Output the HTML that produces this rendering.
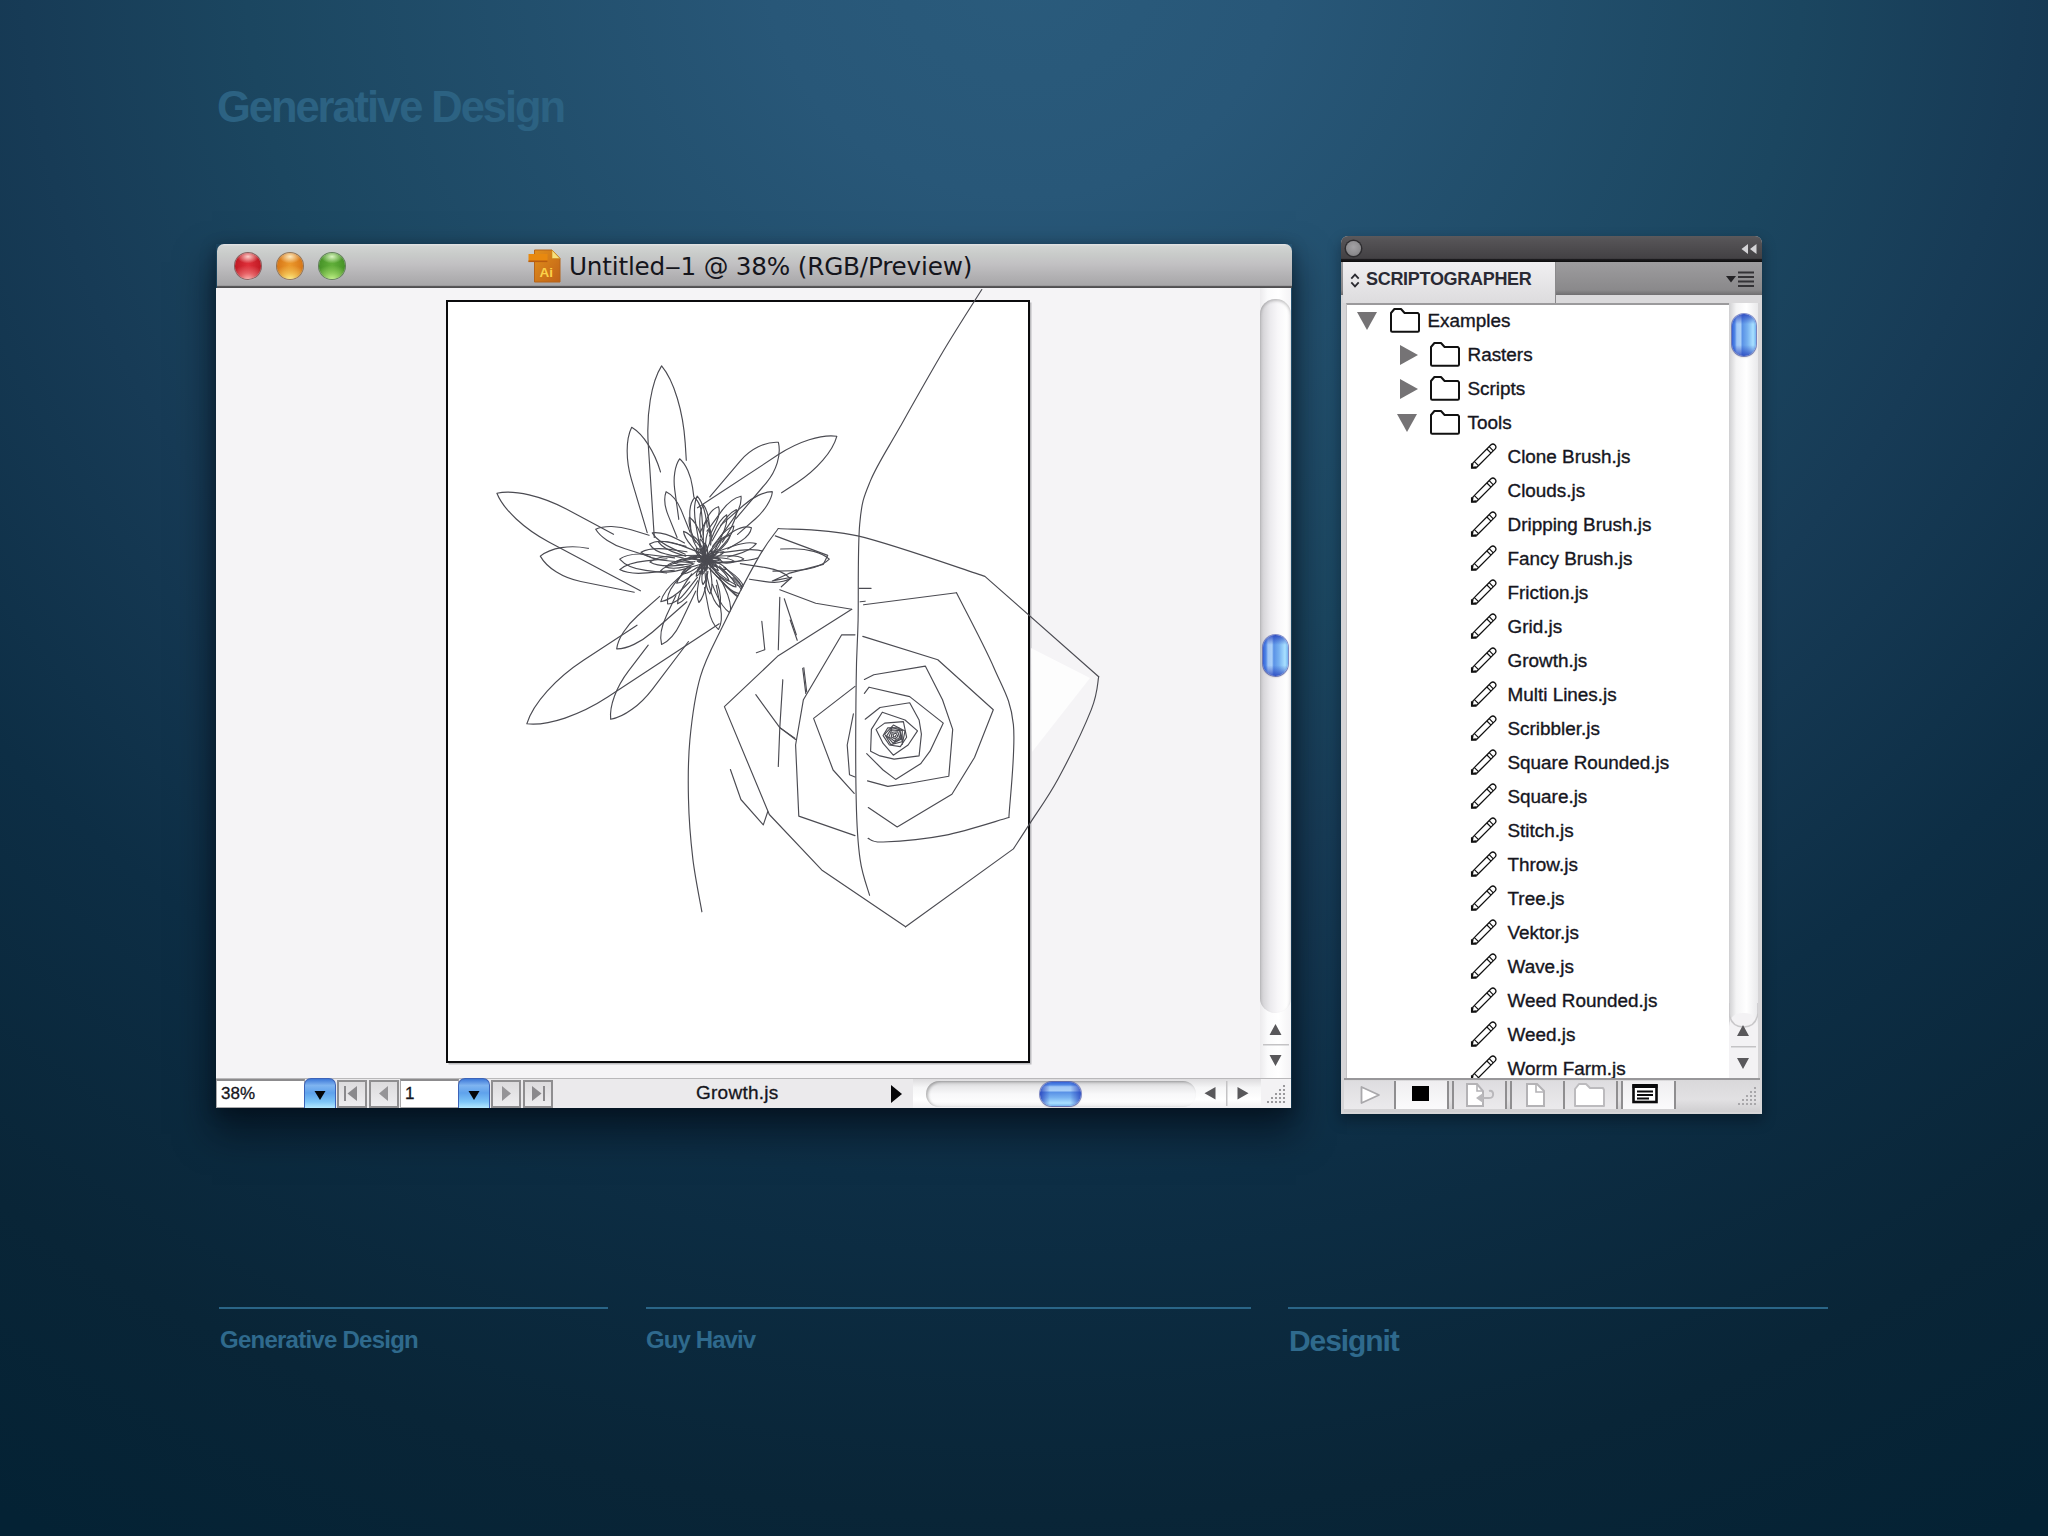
<!DOCTYPE html>
<html lang="en"><head><meta charset="utf-8"><title>Generative Design</title>
<style>
*{box-sizing:border-box;margin:0;padding:0}
html,body{width:2048px;height:1536px;overflow:hidden}
body{position:relative;font-family:"Liberation Sans",sans-serif;background:#0a2840;
 background-image:radial-gradient(ellipse 1974px 1811px at 50% -40px,#2a5b7c 0%,#285778 13%,#1b4660 39.4%,#173b56 50.6%,#0d2e45 67.6%,#092537 86%,#042234 100%)}
.abs{position:absolute}
h1{position:absolute;left:217px;top:82px;font-size:43.5px;line-height:50px;font-weight:bold;letter-spacing:-2.06px;color:#2c6282;white-space:nowrap}
.foot{position:absolute;top:1307px;border-top:2px solid #2a6587;color:#2f6a8d;font-weight:bold;white-space:nowrap}
.foot span{position:absolute;left:0}
/* main window */
#win{position:absolute;left:216px;top:244px;width:1076px;height:864px;box-shadow:0 22px 34px 4px rgba(0,8,16,.55),0 4px 14px rgba(0,8,16,.35)}
#tbar{position:absolute;left:1px;top:0;width:1075px;height:44px;border-radius:7px 7px 0 0;
 background:linear-gradient(#e4e4e6 0,#d2d4d3 5%,#c9ccca 22%,#c2c1c3 45%,#b1b0b2 75%,#a8a7a9 94%,#5a595b 96%,#4c4b4d 100%)}
.tl{position:absolute;top:9px;width:26px;height:26px;border-radius:50%}
#ttl{position:absolute;left:352px;top:7px;font-family:"DejaVu Sans","Liberation Sans",sans-serif;font-size:24.7px;line-height:32px;color:#15151c;white-space:nowrap;letter-spacing:-.2px}
#canvas{position:absolute;left:0;top:44px;width:1075px;height:790px;background:#f5f4f6;overflow:hidden}
#vs{position:absolute;left:1044px;top:44px;width:31px;height:790px;background:linear-gradient(90deg,#ecebed 0,#fbfbfc 25%,#fff 60%,#f4f3f5 100%)}
#vtrack{position:absolute;left:0;top:11px;width:31px;height:714px;border-radius:15px;
 background:linear-gradient(90deg,#c9c8cb 0,#dad9dc 14%,#ecebee 34%,#f8f7f9 58%,#fefefe 85%,#f3f2f4 100%);box-shadow:inset 0 2px 3px rgba(0,0,0,.22)}
.thumb{position:absolute;border-radius:13px}
#sbar{position:absolute;left:0;top:834px;width:1075px;height:30px;background:#ebeaec;border-top:1px solid #b9b8ba;font-size:17px;color:#15151c;-webkit-text-stroke:.3px #15151c}
.fld{position:absolute;top:0;height:29px;background:#fff;border:1px solid #a9a8aa;border-top:2px solid #8c8b8d;line-height:26px;padding-left:4px}
.dd{position:absolute;top:-1px;height:30px;width:32px;border-radius:7px 7px 0 0;border:1px solid #3c63b8;border-bottom:none;
 background:linear-gradient(#3d78d8 0,#7fb4f0 22%,#5fa2ec 48%,#7cc4f7 78%,#b4e8ff 100%)}
.nb{position:absolute;top:1px;height:28px;width:30px;border:2px solid #8f8e90;background:linear-gradient(#dcdbdd,#eeedef)}
.nb svg,.dd svg{position:absolute;left:0;top:0}
/* panel */
#pan{position:absolute;left:1341px;top:236px;width:421px;height:878px;background:#d6d5d7;border-radius:7px 7px 0 0;box-shadow:0 6px 14px rgba(0,8,16,.4)}
#pdark{position:absolute;left:0;top:0;width:421px;height:26px;border-radius:7px 7px 0 0;background:linear-gradient(#5b595c 0,#545255 20%,#434144 86%,#1c1b1e 90%,#0c0c0d 100%)}
#pstrip{position:absolute;left:0;top:26px;width:421px;height:33px;background:linear-gradient(#9d9c9e,#8a898b 85%,#6f6e70 100%)}
#ptab{position:absolute;left:2px;top:26px;width:213px;height:41px;background:linear-gradient(#f0eff1,#dddcde);border-right:1px solid #8a898b;
 font-weight:bold;font-size:18px;letter-spacing:-.3px;color:#2a2a34;line-height:34px;white-space:nowrap}
#pband{position:absolute;left:2px;top:59px;width:417px;height:8px;background:#dad9db}
#tree{position:absolute;left:5px;top:67px;width:383px;height:775px;background:#fff;border-top:2px solid #9b9a9c;border-left:1px solid #c4c3c5;overflow:hidden}
.row{position:absolute;left:0;width:383px;height:34px}
.ic{position:absolute} .ic svg{display:block}
.lbl{position:absolute;top:-.6px;line-height:34px;font-size:18.9px;color:#16161e;white-space:nowrap;-webkit-text-stroke:.35px #16161e}
#pvs{position:absolute;left:388px;top:67px;width:29px;height:776px;background:linear-gradient(90deg,#cfcfd1 0,#f4f4f5 25%,#fff 60%,#e9e9eb 100%)}
#ptool{position:absolute;left:3px;top:842px;width:416px;height:34px;background:linear-gradient(#d9d8da,#e2e1e3 60%,#cfced0);border-top:2px solid #98979a}
.tb{position:absolute;top:1px;height:28px;border-left:2px solid #8f8e90;border-right:2px solid #8f8e90;background:linear-gradient(#dedde0,#ebeaec)}
.tb.on{background:linear-gradient(#efeef0,#fbfbfc)}
.tb svg{position:absolute}
</style></head><body>
<h1>Generative Design</h1>

<div id="win">
 <div id="tbar">
  <div class="tl" style="left:18px;background:radial-gradient(ellipse 42% 26% at 50% 14%,rgba(255,215,210,.95) 0,rgba(255,200,195,0) 100%),radial-gradient(ellipse 75% 55% at 50% 102%,#ffb4b0 0,rgba(255,150,150,.55) 45%,rgba(240,80,80,0) 100%),radial-gradient(circle at 50% 45%,#e0303a 0,#c41c26 60%,#8a1016 100%);box-shadow:0 0 0 1px rgba(95,25,25,.6),0 1px 1px rgba(255,255,255,.5)"></div>
  <div class="tl" style="left:60px;background:radial-gradient(ellipse 42% 26% at 50% 14%,rgba(255,240,200,.95) 0,rgba(255,230,190,0) 100%),radial-gradient(ellipse 75% 55% at 50% 102%,#fff08a 0,rgba(255,225,110,.6) 45%,rgba(240,170,60,0) 100%),radial-gradient(circle at 50% 45%,#ec9a2c 0,#d97a1a 60%,#a0540e 100%);box-shadow:0 0 0 1px rgba(110,60,10,.6),0 1px 1px rgba(255,255,255,.5)"></div>
  <div class="tl" style="left:102px;background:radial-gradient(ellipse 42% 26% at 50% 14%,rgba(225,250,200,.95) 0,rgba(220,250,190,0) 100%),radial-gradient(ellipse 75% 55% at 50% 102%,#c6f58e 0,rgba(180,235,120,.6) 45%,rgba(120,200,80,0) 100%),radial-gradient(circle at 50% 45%,#62b03a 0,#4a962a 60%,#2c6816 100%);box-shadow:0 0 0 1px rgba(30,80,15,.6),0 1px 1px rgba(255,255,255,.5)"></div>
  <svg class="abs" style="left:310px;top:4px" width="36" height="36" viewBox="0 0 36 36">
   <defs><linearGradient id="ag" x1="0" y1="0" x2="1" y2="1"><stop offset="0" stop-color="#e3901a"/><stop offset="1" stop-color="#bf6218"/></linearGradient></defs>
   <path d="M7.5,2 L25,2 L33,10.5 L33,34 L7.5,34 Z" fill="url(#ag)" stroke="#b5641a" stroke-width="1"/>
   <path d="M25,2 L25,10.5 L33,10.5 Z" fill="#f7e07c" stroke="#c98a1e" stroke-width=".6"/>
   <rect x="1.5" y="6" width="19" height="8" fill="#e8890f"/><rect x="1.5" y="12.5" width="19" height="1.6" fill="#b85c10"/>
   <text x="12.5" y="28.5" font-family="Liberation Sans,sans-serif" font-weight="bold" font-size="13.5" fill="#fbd24a">Ai</text>
  </svg>
  <div id="ttl">Untitled‒1 @ 38% (RGB/Preview)</div>
 </div>
 <div id="canvas"></div>
 <svg class="abs" style="left:0;top:44px" width="1044" height="790" viewBox="216 288 1044 790">
  <defs><clipPath id="fc"><polygon points="440,290 1040,290 1040,528 778.3,528.5 758.8,557 722.9,625.8 700.4,676.7 690,739.6 688.5,799.5 693,859.4 702,911.8 702,1070 440,1070"/></clipPath></defs>
  <rect x="448.5" y="302.5" width="583" height="762" fill="rgba(120,120,125,.45)"/>
  <rect x="447" y="301" width="582" height="761" fill="#fff" stroke="#0b0b0d" stroke-width="2"/>
  <path d="M1031,648 L1090,678 L1032,752 Z" fill="#fff" opacity=".8"/>
  <g fill="none" stroke="#4b4b52" stroke-width="1.15" stroke-linejoin="round" stroke-linecap="round">
<g clip-path="url(#fc)"><path d="M686.3,460.3 L685.2,442.9 C683.1,411.6 674.1,380.8 661.6,365.9 C651.2,382.3 646.2,414.0 648.3,445.3 L654.3,537.4"/>
<path d="M660.5,472.0 L660.2,470.9 C654.5,451.8 643.4,434.3 631.7,427.3 C625.6,439.5 625.8,460.3 631.4,479.4 L647.2,532.6"/>
<path d="M613.5,534.3 L566.3,509.1 C542.0,496.2 514.5,489.5 496.9,493.2 C503.6,509.9 524.5,529.0 548.8,542.0 L640.4,590.8"/>
<path d="M588.4,548.4 L587.5,548.2 C569.9,544.7 551.2,547.5 540.3,556.1 C547.0,568.2 563.3,578.0 580.8,581.5 L634.3,592.2"/>
<path d="M781.6,492.8 L796.9,482.7 C816.5,469.8 832.7,451.5 836.8,436.3 C821.3,434.1 798.1,441.7 778.4,454.6 L697.5,507.8"/>
<path d="M735.7,518.9 L766.3,482.8 C776.3,471.0 781.4,455.0 778.4,442.3 C765.4,441.4 750.4,449.0 740.4,460.8 L709.8,496.9"/>
<path d="M637.0,625.2 L583.5,660.3 C556.0,678.3 533.1,703.4 526.8,723.8 C548.1,726.2 580.2,715.1 607.7,697.1 L719.2,623.8"/>
<path d="M648.2,645.1 L628.4,671.2 C616.5,686.8 609.2,705.9 610.7,719.3 C624.0,717.1 640.4,704.9 652.3,689.3 L688.5,641.5"/>
<path d="M659.7,596.4 L637.7,615.8 C626.4,625.7 617.8,638.8 616.7,648.9 C626.9,649.1 640.9,642.2 652.3,632.3 L686.9,601.8"/>
<path d="M649.0,535.3 L631.1,529.7 C618.1,525.7 604.0,525.3 595.7,529.2 C600.4,537.1 612.2,544.8 625.1,548.8 L650.2,556.7"/>
<path d="M693.9,497.1 L692.5,487.2 C690.9,475.4 685.9,464.0 679.6,458.8 C674.9,465.5 673.1,477.8 674.7,489.6 L678.8,519.3"/>
<path d="M737.6,534.4 L755.5,518.7 C764.6,510.6 771.5,499.9 772.4,491.7 C764.2,491.6 752.7,497.1 743.6,505.2 L720.6,525.4"/>
<path d="M690.1,532.2 L681.4,510.6 C677.9,502.0 671.9,494.4 666.1,491.7 C663.8,497.7 664.9,507.3 668.4,515.9 L677.1,537.5"/>
<path d="M675.9,595.5 L666.5,615.4 C661.7,625.7 659.6,637.2 661.6,644.5 C668.5,641.5 676.1,632.5 681.0,622.3 L695.8,591.0"/>
<path d="M674.6,557.9 L647.6,554.5 C636.9,553.2 625.7,554.9 619.7,559.1 C624.5,564.7 634.9,569.1 645.7,570.4 L666.6,573.0"/>
<path d="M718.3,539.4 L732.5,519.9 C738.2,512.0 741.7,502.7 741.0,496.2 C734.6,497.6 726.8,503.8 721.2,511.6 L707.0,531.2"/>
<path d="M686.0,546.4 L668.5,542.3 C661.5,540.7 654.0,541.3 649.6,544.1 C652.3,548.6 658.8,552.4 665.8,554.0 L683.3,558.1"/>
<path d="M686.4,568.7 L674.2,584.2 C669.4,590.4 666.6,598.3 667.6,604.0 C673.4,603.6 680.4,599.0 685.2,592.8 L697.4,577.3"/>
<path d="M727.6,549.0 L741.1,540.9 C746.5,537.7 750.7,532.5 751.5,527.7 C746.9,526.1 740.3,527.4 734.9,530.6 L721.4,538.7"/>
<path d="M667.0,558.8 L646.0,560.9 C635.3,562.0 624.7,565.3 619.7,569.6 C625.4,572.7 636.5,573.9 647.2,572.9 L674.2,570.2"/>
<path d="M704.5,587.5 L708.6,609.0 C710.2,617.7 714.1,625.9 718.5,629.5 C721.4,624.5 722.0,615.4 720.4,606.8 L716.3,585.3"/>
<path d="M716.7,576.2 L727.5,587.0 C731.8,591.3 737.7,594.0 742.5,593.5 C743.0,588.8 740.3,582.8 735.9,578.5 L725.2,567.7"/>
<path d="M703.2,535.0 L701.9,516.1 C701.4,508.6 698.5,501.2 694.6,497.7 C691.1,501.7 689.4,509.5 689.9,517.0 L691.3,535.9"/>
<path d="M709.5,535.9 L716.3,522.4 C718.9,517.0 719.9,510.8 718.5,506.7 C714.4,508.0 710.0,512.5 707.3,517.9 L700.6,531.4"/>
<path d="M705.0,559.0 L703.7,559.6 C702.9,559.9 702.2,560.6 702.1,561.3 C702.7,561.7 703.7,561.6 704.5,561.1 L706.3,560.1"/>
<path d="M707.9,557.7 L708.5,556.2 C708.9,555.2 709.0,554.0 708.6,553.3 C707.9,553.6 707.2,554.6 706.9,555.6 L706.4,557.3"/>
<path d="M707.0,561.4 L707.9,563.0 C708.5,564.1 709.5,565.1 710.3,565.3 C710.5,564.5 710.1,563.2 709.4,562.1 L708.1,560.2"/>
<path d="M703.3,556.7 L702.7,556.4 C701.3,555.7 699.8,555.4 698.8,555.6 C699.3,556.5 700.5,557.4 701.9,558.0 L703.3,558.5"/>
<path d="M708.4,558.9 L711.6,557.2 C713.1,556.4 714.4,555.3 714.9,554.3 C713.8,554.3 712.2,554.8 710.7,555.7 L708.0,557.4"/>
<path d="M705.7,560.2 L705.1,564.9 C704.9,566.8 705.0,568.8 705.6,569.8 C706.3,568.9 706.8,567.0 707.0,565.1 L707.2,560.4"/>
<path d="M705.7,556.1 L703.8,553.1 C702.7,551.2 701.2,549.7 700.0,549.1 C700.0,550.4 700.9,552.4 702.1,554.2 L702.9,555.3"/>
<path d="M710.3,560.2 L713.7,560.3 C716.0,560.4 718.4,560.0 719.6,559.3 C718.4,558.5 716.1,558.0 713.7,558.1 L712.8,558.1"/>
<path d="M702.0,562.8 L700.6,564.3 C698.9,566.3 697.7,568.5 697.5,570.1 C699.0,569.6 700.9,567.9 702.5,565.9 L703.1,565.2"/>
<path d="M707.4,554.1 L707.3,550.6 C707.2,547.8 706.5,545.1 705.5,543.8 C704.6,545.2 704.4,548.0 704.6,550.8 L705.2,556.7"/>
<path d="M708.5,562.8 L712.1,566.4 C714.1,568.6 716.6,570.3 718.4,570.6 C718.0,568.8 716.2,566.4 714.1,564.4 L711.0,561.6"/>
<path d="M701.1,557.1 L697.0,556.6 C693.9,556.1 690.7,556.3 689.0,557.2 C690.5,558.5 693.6,559.3 696.7,559.6 L699.6,559.8"/>
<path d="M708.8,559.6 L716.7,556.7 C719.9,555.5 722.8,553.6 723.9,551.9 C721.9,551.5 718.6,552.3 715.5,553.7 L708.8,556.6"/>
<path d="M701.3,564.7 L699.4,567.6 C697.5,570.7 696.2,574.1 696.3,576.2 C698.3,575.3 700.6,572.5 702.4,569.4 L703.8,566.9"/>
<path d="M705.2,549.1 L704.8,547.5 C703.7,543.8 702.0,540.4 700.2,539.0 C699.5,541.2 700.0,545.0 701.3,548.6 L703.8,555.7"/>
<path d="M709.0,562.2 L716.5,566.4 C720.1,568.3 723.9,569.5 726.3,569.3 C725.2,567.2 721.9,564.7 718.3,563.0 L714.2,561.0"/>
<path d="M702.7,557.5 L693.6,557.6 C689.4,557.7 685.2,558.6 683.2,560.1 C685.3,561.4 689.6,562.0 693.8,561.7 L694.9,561.6"/>
<path d="M710.0,557.5 L716.3,549.6 C719.1,546.1 721.1,542.1 721.3,539.5 C718.8,540.3 715.5,543.4 712.9,547.0 L709.6,551.8"/>
<path d="M703.3,567.5 L702.4,572.8 C701.6,577.4 701.8,582.1 703.0,584.6 C704.9,582.5 706.3,578.0 706.8,573.4 L707.0,571.4"/>
<path d="M705.7,553.7 L700.9,545.3 C698.5,541.0 695.3,537.3 692.7,536.1 C692.5,539.0 694.3,543.6 696.9,547.7 L699.2,551.2"/>
<path d="M716.6,562.2 L721.7,562.8 C726.7,563.4 731.8,563.0 734.4,561.5 C732.1,559.6 727.1,558.3 722.1,558.0 L709.9,557.3"/>
<path d="M693.9,563.7 L691.4,565.0 C686.8,567.6 682.8,571.0 681.4,573.9 C684.5,574.0 689.5,572.2 694.0,569.4 L697.7,567.1"/>
<path d="M710.6,545.0 L710.9,542.8 C711.6,537.4 711.2,531.9 709.7,529.0 C707.6,531.5 706.1,536.8 705.7,542.3 L704.8,553.4"/>
<path d="M711.0,566.9 L717.0,573.2 C720.9,577.2 725.7,580.5 729.0,581.1 C728.3,577.8 725.0,573.1 720.8,569.3 L715.5,564.4"/>
<path d="M699.5,557.4 L688.4,558.4 C682.6,558.9 676.8,560.6 674.2,562.9 C677.3,564.5 683.3,564.9 689.1,564.0 L692.4,563.5"/>
<path d="M719.3,550.2 L721.7,548.0 C726.1,543.8 729.6,538.7 730.3,535.1 C726.7,535.9 721.7,539.4 717.5,543.9 L712.5,549.3"/>
<path d="M705.1,573.0 L705.5,578.5 C705.9,584.8 707.6,590.9 710.0,593.8 C711.8,590.5 712.3,584.1 711.5,577.9 L709.5,562.7"/>
<path d="M700.1,546.7 L696.3,541.9 C692.2,536.8 687.2,532.5 683.5,531.4 C683.9,535.3 687.2,541.0 691.5,545.9 L701.1,556.8"/>
<path d="M719.3,562.0 L727.0,562.2 C733.7,562.3 740.4,561.1 743.7,558.9 C740.4,556.6 733.7,555.5 727.0,555.8 L712.4,556.3"/>
<path d="M690.8,567.7 L688.0,569.8 C682.5,573.9 677.9,579.2 676.7,583.2 C680.8,582.8 687.0,579.4 692.2,574.9 L705.2,563.8"/>
<path d="M709.9,543.5 L710.2,537.4 C710.5,530.3 709.3,523.2 706.9,519.6 C704.5,523.1 703.2,530.2 703.3,537.3 L703.6,551.5"/>
<path d="M715.6,572.1 L720.4,577.0 C725.6,582.2 731.8,586.2 736.1,587.0 C735.2,582.7 730.7,576.7 725.2,571.9 L722.8,569.7"/>
<path d="M695.0,558.0 L683.3,559.8 C675.8,561.0 668.7,563.7 665.5,566.9 C669.6,568.6 677.3,568.5 684.6,566.9 L690.6,565.6"/>
<path d="M718.8,549.7 L724.5,543.3 C729.6,537.5 733.5,530.7 733.9,526.0 C729.5,527.4 723.5,532.4 718.7,538.5 L712.6,546.4"/>
<path d="M700.8,571.8 L698.6,582.3 C697.0,590.1 697.0,598.2 698.9,602.5 C702.2,599.1 704.9,591.5 706.1,583.7 L707.9,571.4"/>
<path d="M702.7,539.8 L700.7,534.6 C697.9,527.0 693.5,520.0 689.4,517.2 C688.4,522.0 690.2,530.1 693.5,537.5 L695.5,542.2"/>
<path d="M710.9,566.7 L724.6,577.6 C731.2,582.8 738.7,586.6 743.7,586.8 C742.1,582.1 736.2,575.9 729.4,571.1 L723.7,567.1"/>
<path d="M696.2,558.0 L680.2,561.7 C671.8,563.6 663.9,567.2 660.5,571.0 C665.4,572.7 674.0,572.0 682.2,569.6 L701.7,564.0"/>
<path d="M712.2,555.3 L721.5,536.5 C725.4,528.6 727.6,520.0 726.7,514.8 C722.3,517.6 717.2,524.9 713.8,533.0 L706.2,551.1"/>
<path d="M707.0,576.1 L709.5,586.7 C711.6,595.4 715.4,603.7 719.5,607.2 C721.3,602.1 720.4,593.0 717.8,584.5 L716.5,580.1"/>
<path d="M702.3,553.6 L681.6,545.6 C673.0,542.3 663.8,540.7 658.5,542.1 C661.8,546.5 669.9,551.1 678.6,553.9 L685.7,556.2"/>
<path d="M727.6,557.0 L735.3,554.9 C744.3,552.4 752.8,548.0 756.3,543.6 C750.9,542.0 741.5,543.2 732.6,546.3 L713.9,552.7"/>
<path d="M691.8,573.9 L686.7,581.2 C681.3,589.1 677.5,598.1 677.6,603.8 C682.9,601.6 689.5,594.4 694.5,586.2 L697.8,580.7"/>
<path d="M709.6,533.1 L709.5,528.9 C709.2,519.1 706.9,509.4 703.3,504.7 C700.3,509.8 699.2,519.7 700.1,529.5 L700.7,537.2"/>
<path d="M709.7,568.3 L724.4,584.4 C731.2,591.7 739.4,597.7 745.3,598.9 C744.2,593.0 738.5,584.6 731.3,577.7 L719.5,566.2"/>
<path d="M698.8,555.3 L675.1,555.8 C664.9,556.0 654.8,558.3 649.9,562.0 C655.1,565.1 665.4,566.4 675.6,565.6 L683.1,565.0"/>
<path d="M722.3,542.1 L727.3,534.4 C732.9,525.6 736.7,515.8 736.4,509.5 C730.7,512.2 723.8,520.2 718.7,529.2 L712.2,540.8"/>
<path d="M712.3,584.3 L714.9,590.9 C718.9,600.7 724.9,609.7 730.3,613.2 C731.4,606.9 728.9,596.4 724.3,586.8 L719.3,576.2"/>
<path d="M684.5,542.9 L679.0,540.0 C669.4,535.0 658.8,532.0 652.3,532.9 C655.6,538.5 664.6,545.0 674.5,549.4 L685.2,554.2"/>
<path d="M713.6,562.9 L740.6,561.0 C751.7,560.2 762.5,557.2 767.6,552.9 C761.7,549.8 750.5,549.0 739.6,550.4 L720.5,552.9"/>
<path d="M691.0,566.9 L677.7,578.6 C669.2,586.0 662.3,595.1 660.8,601.7 C667.5,600.6 677.0,594.4 685.0,586.5 L689.8,581.8"/>
<path d="M707.3,527.3 L706.8,523.7 C705.5,512.3 701.8,501.2 697.2,496.1 C694.2,502.4 693.9,514.0 696.0,525.3 L700.6,551.2"/>
<path d="M708.5,567.7 L727.9,588.2 C736.0,596.6 745.7,603.4 752.6,604.7 C751.2,597.8 744.4,588.1 735.8,580.2 L733.0,577.6"/>
<path d="M686.9,551.8 L671.1,549.6 C659.3,548.0 647.3,548.9 641.0,552.2 C646.4,556.8 658.0,560.1 669.9,561.0 L692.4,562.7"/>
<path d="M706.0,560.5 L708.0,558.8 C708.8,558.1 709.4,557.1 709.4,556.3 C708.7,556.3 707.7,556.9 706.9,557.6 L705.1,559.6"/>
<path d="M706.5,557.7 L705.1,560.5 C704.5,561.7 704.2,563.0 704.5,563.8 C705.2,563.4 706.0,562.4 706.5,561.2 L707.7,558.2"/>
<path d="M707.8,559.6 L705.8,556.6 C704.9,555.3 703.8,554.3 702.9,554.1 C702.9,555.0 703.5,556.4 704.4,557.6 L706.6,560.5"/>
<path d="M705.3,559.7 L709.3,560.8 C710.9,561.3 712.7,561.3 713.6,560.8 C713.0,559.9 711.4,559.2 709.8,558.9 L705.7,558.0"/>
<path d="M707.1,557.9 L702.6,559.2 C700.9,559.8 699.2,560.8 698.6,561.9 C699.8,562.4 701.7,562.1 703.4,561.4 L707.8,559.7"/>
<path d="M706.7,560.5 L710.5,556.9 C712.0,555.5 713.1,553.7 713.1,552.3 C711.8,552.4 710.0,553.5 708.6,555.1 L705.2,558.9"/>
<path d="M705.5,558.1 L704.2,563.7 C703.6,565.9 703.7,568.2 704.5,569.5 C705.7,568.6 706.7,566.5 707.0,564.2 L707.9,558.6"/>
<path d="M708.0,559.1 L705.8,553.4 C705.0,551.1 703.4,549.0 701.9,548.4 C701.4,549.9 701.8,552.4 702.9,554.7 L705.5,560.2"/>
<path d="M705.2,560.0 L710.5,564.1 C712.6,565.8 715.1,566.8 716.9,566.6 C716.5,564.8 714.8,562.7 712.5,561.3 L707.0,557.6"/>
<path d="M707.2,557.6 L700.2,556.0 C697.4,555.4 694.5,555.6 692.9,556.7 C694.0,558.3 696.7,559.4 699.6,559.8 L706.7,560.8"/>
<path d="M707.4,560.7 L713.6,556.2 C716.1,554.4 718.0,551.9 718.3,549.8 C716.2,549.6 713.3,550.9 711.0,552.9 L705.2,557.9"/>
<path d="M704.8,558.4 L702.1,566.1 C701.1,569.2 700.9,572.5 702.0,574.5 C703.9,573.4 705.6,570.5 706.4,567.4 L708.4,559.5"/>
<path d="M707.4,560.4 L707.1,557.7 C706.9,556.6 706.5,555.6 705.8,555.2 C705.4,555.8 705.3,556.9 705.5,558.0 L706.1,560.6"/>
<path d="M705.2,558.5 L707.1,561.1 C707.8,562.1 708.8,563.0 709.7,563.1 C709.7,562.3 709.1,561.1 708.3,560.1 L706.3,557.7"/>
<path d="M707.8,558.5 L704.1,558.0 C702.7,557.7 701.2,557.9 700.4,558.4 C701.0,559.1 702.5,559.6 703.9,559.7 L707.6,560.0"/>
<path d="M705.9,560.3 L709.8,558.7 C711.3,558.1 712.7,557.1 713.2,556.1 C712.1,555.8 710.5,556.2 709.0,556.9 L705.2,558.8"/>
<path d="M706.4,557.7 L703.3,561.3 C702.1,562.8 701.3,564.5 701.4,565.7 C702.6,565.5 704.1,564.3 705.2,562.8 L707.9,558.9"/>
<path d="M707.7,559.9 L707.7,554.7 C707.7,552.7 707.2,550.6 706.2,549.6 C705.3,550.7 704.9,552.8 705.1,554.8 L705.5,560.0"/>
<path d="M705.1,559.3 L708.5,563.8 C709.9,565.7 711.7,567.1 713.3,567.3 C713.3,565.8 712.3,563.7 710.8,562.0 L707.0,557.7"/>
<path d="M707.2,557.8 L701.1,557.2 C698.7,556.9 696.2,557.3 694.9,558.4 C696.0,559.6 698.4,560.3 700.9,560.4 L707.1,560.5"/>
<path d="M707.0,560.6 L712.6,557.0 C714.8,555.5 716.6,553.4 716.9,551.6 C715.1,551.4 712.6,552.4 710.5,554.1 L705.2,558.2"/>
<path d="M705.1,558.3 L702.8,565.1 C701.9,567.8 701.8,570.7 702.7,572.5 C704.4,571.5 705.8,568.9 706.5,566.1 L708.2,559.2"/>
<path d="M708.0,558.1 L703.0,552.3 C701.0,550.0 698.4,548.3 696.3,548.2 C696.3,550.3 697.8,553.0 700.0,555.2 L705.5,560.5"/>
<path d="M706.0,560.9 L714.0,562.7 C717.2,563.4 720.5,563.1 722.4,561.9 C721.1,560.1 718.0,558.7 714.8,558.3 L706.7,557.2"/>
<path d="M707.8,558.2 L705.1,558.6 C704.0,558.8 703.0,559.3 702.6,560.0 C703.3,560.4 704.4,560.4 705.4,560.2 L708.1,559.4"/>
<path d="M706.0,560.4 L708.5,558.5 C709.5,557.7 710.3,556.6 710.4,555.8 C709.6,555.8 708.4,556.4 707.5,557.3 L705.1,559.4"/>
<path d="M706.2,557.8 L705.0,561.3 C704.5,562.7 704.4,564.2 704.8,565.1 C705.6,564.5 706.3,563.2 706.7,561.8 L707.6,558.2"/>
<path d="M707.8,559.6 L705.8,555.9 C705.0,554.4 703.9,553.2 702.8,552.8 C702.6,553.9 703.2,555.5 704.1,556.9 L706.3,560.5"/>
<path d="M705.2,559.6 L709.4,561.8 C711.0,562.7 712.9,563.1 714.1,562.8 C713.6,561.7 712.1,560.5 710.4,559.7 L706.1,557.8"/>
<path d="M707.1,557.8 L702.0,558.8 C700.0,559.2 698.1,560.1 697.3,561.2 C698.5,561.9 700.6,561.9 702.6,561.3 L707.6,560.0"/>
<path d="M707.2,560.4 L710.4,555.7 C711.7,553.8 712.5,551.6 712.2,550.1 C710.7,550.6 709.1,552.2 707.9,554.2 L705.1,559.1"/>
<path d="M705.2,558.4 L704.6,564.5 C704.4,567.0 704.8,569.5 705.9,570.8 C707.1,569.6 707.8,567.2 707.8,564.7 L707.9,558.6"/>
<path d="M707.8,558.2 L702.5,554.2 C700.3,552.6 697.7,551.6 695.9,551.9 C696.4,553.7 698.2,555.7 700.5,557.1 L706.1,560.6"/>
<path d="M706.1,560.7 L713.2,561.2 C716.1,561.4 719.0,560.8 720.4,559.5 C719.0,558.1 716.2,557.3 713.3,557.4 L706.2,557.5"/>
<path d="M705.2,558.0 L701.0,564.4 C699.4,567.0 698.5,570.0 699.0,572.1 C701.0,571.5 703.2,569.2 704.6,566.5 L708.2,559.7"/>
<path d="M708.4,559.0 L707.6,550.9 C707.3,547.7 706.0,544.6 704.3,543.2 C703.0,545.0 702.6,548.3 703.2,551.5 L704.7,559.6"/></g>
<path d="M772.9,571.1 L793.1,570.8 C807.7,570.5 822.2,566.1 829.3,559.1 C821.9,552.4 807.3,548.5 792.7,548.8 L780.6,549.0"/>
<path d="M749.5,579.2 L763.7,581.4 C773.9,583.1 784.6,582.0 790.4,578.6 C785.9,573.5 776.1,569.2 765.9,567.6 L740.3,563.6"/>
<path d="M981.8,289.5 C975.5,299.6 957.4,327.5 943.8,350.3 C930.3,373.1 912.6,404.6 900.4,426.3 C888.2,448.0 877.3,464.3 870.5,480.6 C863.8,496.9 861.8,500.8 859.7,524.1 C857.6,547.3 858.6,594.2 858.1,620.2 C857.5,646.1 856.5,649.8 856.2,679.7 C855.8,709.6 855.5,769.5 856.2,799.5 C856.8,829.4 857.8,843.4 860.1,859.4 C862.3,875.4 868.0,889.3 869.6,895.3"/>
<path d="M778.3,528.5 C775.1,533.2 768.1,540.7 758.8,556.9 C749.6,573.1 732.6,605.8 722.9,625.8 C713.2,645.7 705.9,657.7 700.4,676.7 C694.9,695.7 691.9,719.1 689.9,739.6 C688.0,760.1 688.0,779.5 688.5,799.5 C688.9,819.4 690.7,840.7 692.9,859.4 C695.2,878.1 700.4,903.1 701.9,911.8"/>
<path d="M778.3,528.5 C791.5,529.7 823.2,528.0 857.7,535.9 C892.1,543.9 963.7,569.6 984.9,576.4 L1098.7,676.7"/>
<path d="M1098.7,676.7 C1097.5,682.2 1098.0,692.7 1091.3,709.6 C1084.5,726.6 1068.5,759.6 1058.3,778.5 C1048.1,797.5 1037.3,811.7 1029.9,823.4 C1022.4,835.2 1016.1,844.7 1013.4,848.9 L905.6,926.8"/>
<path d="M905.6,926.8 L821.7,869.9 L769.3,814.5 L724.4,706.6 L778.3,655.7 L851.7,609.3"/>
<path d="M863.6,604.8 L956.5,592.8"/>
<path d="M956.5,592.8 C962.7,605.3 984.4,645.7 993.9,667.7 C1003.4,689.7 1010.9,699.7 1013.4,724.6 C1015.9,749.6 1009.6,802.0 1008.9,817.5"/>
<path d="M1008.9,817.5 C998.2,820.4 965.5,831.3 944.5,835.4 C923.5,839.5 895.8,841.5 883.1,842.0 C870.4,842.5 870.6,839.0 868.1,838.4"/>
<path d="M862.8,636.4 L937.8,659.8 L993.3,709.8 L974.5,757.5 L951.9,794.2 L897.2,827.0 L868.3,807.5"/>
<path d="M864.4,679.4 L873.8,674.7 L925.3,666.1 L942.5,699.7 L952.7,729.4 L948.8,776.2 L909.7,783.3 L887.8,786.4 L867.5,780.9"/>
<path d="M864.4,693.4 L869.1,687.2 L909.7,696.6 L943.3,723.1 L930.0,751.2 L920.6,763.8 L895.6,779.4 L883.1,770.0 L866.7,753.6"/>
<path d="M865.2,719.2 L880.0,707.5 L909.7,702.8 L919.1,720.0 L921.4,734.1 L919.1,755.9 L894.1,759.1 L880.0,755.9 L870.6,751.2 L871.4,729.4 L882.3,712.2 L905.0,720.0 L917.5,730.9 L908.1,745.0 L893.3,755.2 L883.1,743.4 L876.1,729.4 L884.7,723.1 L903.4,721.6 L906.6,737.2 L900.3,746.6 L889.4,745.0 L883.1,735.6 L887.8,727.8 L898.8,727.8 L901.9,737.2 L895.6,741.9"/>
<path d="M895.8,735.6 L895.2,737.0 L893.3,736.6 L893.2,734.1 L896.0,733.2 L897.9,736.2 L895.2,739.1 L891.2,737.1 L892.2,732.2 L897.7,731.8 L899.7,737.4 L894.5,741.2 L888.9,736.9 L891.8,729.9 L899.8,730.8 L901.2,739.3 L893.0,743.1 L886.7,735.9 L892.2,727.5 L902.3,730.6 L902.0,741.7 L890.8,744.6 L884.7,734.2 L893.4,725.1 L905.0,731.1 L902.2,744.4"/>
<path d="M855.0,634.8 L841.7,634.8 L803.4,699.7 L795.6,745.0 L798.8,816.1 L855.0,835.6"/>
<path d="M855.0,686.4 L813.6,718.4 L833.1,770.0 L854.2,793.4"/>
<path d="M853.4,713.8 L847.2,745.0 L849.5,774.7 L855.0,777.0"/>
<path d="M790.2,620.0 L797.2,640.3"/>
<path d="M802.7,668.4 L805.8,693.4"/>
<path d="M780.0,727.8 L795.6,739.5"/>
<path d="M775.3,535.9 L827.7,555.4 L823.2,564.4 L788.8,573.4 L772.3,580.9 L791.8,577.3 L781.3,586.8"/>
<path d="M779.8,589.8 L815.7,603.3 L851.7,609.3"/>
<path d="M761.8,621.3 L764.8,649.7 L756.4,652.7"/>
<path d="M779.8,597.3 L778.3,649.7"/>
<path d="M784.3,598.8 L796.3,634.8"/>
<path d="M782.8,679.7 L779.8,727.6 L778.3,766.5"/>
<path d="M803.8,667.7 L806.7,691.7"/>
<path d="M755.8,694.7 L779.8,727.6 L794.8,738.1"/>
<path d="M730.4,769.5 L740.9,799.5 L763.3,824.9 L767.8,811.5"/>
<path d="M859.2,588.3 L871.1,588.3"/>
<path d="M860.1,601.8 L865.1,601.2"/>
  </g>
 </svg>
 <div id="vs">
  <div id="vtrack"></div>
  <div class="thumb" style="left:3px;top:347px;width:24.5px;height:41px;background:linear-gradient(180deg,rgba(35,60,185,.8) 0,rgba(35,60,185,0) 24%,rgba(35,60,185,0) 74%,rgba(35,60,185,.75) 100%),linear-gradient(90deg,#3662d6 0,#5188e6 12%,#9fc6f6 20%,#a9cff8 36%,#5a92e6 43%,#76b0f0 64%,#a9e0ff 88%,#74b4f0 100%);box-shadow:0 0 0 1px rgba(40,60,170,.55),0 1px 2px rgba(0,0,0,.3)"></div>
  <svg class="abs" style="left:0;top:722px" width="31" height="68" viewBox="0 0 31 68">
   <path d="M9.5,25 L21.5,25 L15.5,14 Z M9.5,45 L21.5,45 L15.5,56 Z" fill="#59585b"/><rect x="3" y="34" width="26" height="1.5" fill="#c4c3c5"/>
  </svg>
 </div>
 <div id="sbar">
  <div class="fld" style="left:0;width:89px">38%</div>
  <div class="dd" style="left:88px"><svg width="30" height="30"><path d="M9.5,12 L20.5,12 L15,21 Z" fill="#05060a"/></svg></div>
  <div class="nb" style="left:121px"><svg width="26" height="24"><path d="M6,4 V19" stroke="#8a898c" stroke-width="2"/><path d="M8.5,11.5 L18,4 L18,19 Z" fill="#8a898c"/></svg></div>
  <div class="nb" style="left:153px"><svg width="26" height="24"><path d="M8,11.5 L17,4 L17,19 Z" fill="#959497"/></svg></div>
  <div class="fld" style="left:184px;width:59px">1</div>
  <div class="dd" style="left:242px"><svg width="30" height="30"><path d="M9.5,12 L20.5,12 L15,21 Z" fill="#05060a"/></svg></div>
  <div class="nb" style="left:275px"><svg width="26" height="24"><path d="M9,4 L18,11.5 L9,19 Z" fill="#959497"/></svg></div>
  <div class="nb" style="left:307px"><svg width="26" height="24"><path d="M19,4 V19" stroke="#8a898c" stroke-width="2"/><path d="M7,4 L16.5,11.5 L7,19 Z" fill="#8a898c"/></svg></div>
  <div class="abs" style="left:480px;top:0;line-height:28px;font-size:19px;letter-spacing:.25px;white-space:nowrap">Growth.js</div>
  <svg class="abs" style="left:672px;top:5px" width="16" height="20"><path d="M3,1 L14,10 L3,19 Z" fill="#060608"/></svg>
  <div class="abs" style="left:697px;top:0;width:348px;height:29px;background:linear-gradient(#dddcde 0,#f6f6f7 30%,#fff 70%,#f0eff1 100%)">
   <div class="abs" style="left:13px;top:2px;width:270px;height:26px;border-radius:13px;background:linear-gradient(#cfcfd1 0,#e8e8ea 22%,#f8f8f9 50%,#fdfdfd 80%,#ededee 100%);box-shadow:inset 2px 1px 3px rgba(0,0,0,.28)"></div>
   <div class="thumb" style="left:127px;top:2.5px;width:41px;height:24.5px;background:linear-gradient(90deg,rgba(35,60,185,.8) 0,rgba(35,60,185,0) 24%,rgba(35,60,185,0) 74%,rgba(35,60,185,.75) 100%),linear-gradient(180deg,#3662d6 0,#5188e6 12%,#9fc6f6 20%,#a9cff8 36%,#5a92e6 43%,#76b0f0 64%,#a9e0ff 88%,#74b4f0 100%);box-shadow:0 0 0 1px rgba(40,60,170,.55),0 1px 2px rgba(0,0,0,.3)"></div>
   <svg class="abs" style="left:286px;top:0" width="62" height="29"><path d="M16.5,8 L16.5,20.5 L5.5,14.2 Z M38.5,8 L38.5,20.5 L49.5,14.2 Z" fill="#59585b"/><rect x="27" y="2" width="1.5" height="25" fill="#c4c3c5"/></svg>
  </div>
  <svg class="abs" style="left:1045px;top:0" width="30" height="29"><rect width="30" height="29" fill="#f3f2f4"/>
   <g fill="#9a999c"><rect x="22" y="6" width="2" height="2"/><rect x="18" y="10" width="2" height="2"/><rect x="22" y="10" width="2" height="2"/>
   <rect x="14" y="14" width="2" height="2"/><rect x="18" y="14" width="2" height="2"/><rect x="22" y="14" width="2" height="2"/>
   <rect x="10" y="18" width="2" height="2"/><rect x="14" y="18" width="2" height="2"/><rect x="18" y="18" width="2" height="2"/><rect x="22" y="18" width="2" height="2"/>
   <rect x="6" y="22" width="2" height="2"/><rect x="10" y="22" width="2" height="2"/><rect x="14" y="22" width="2" height="2"/><rect x="18" y="22" width="2" height="2"/><rect x="22" y="22" width="2" height="2"/></g></svg>
 </div>
</div>

<div id="pan">
 <div id="pdark">
  <div class="abs" style="left:5px;top:5px;width:15px;height:15px;border-radius:50%;background:radial-gradient(circle at 50% 40%,#a3a2a5 0,#8d8c8f 60%,#6f6e71 100%);box-shadow:0 0 0 1.5px #2e2d30"></div>
  <svg class="abs" style="left:399px;top:7px" width="20" height="13"><path d="M8,1 L8,11 L1.5,6 Z M16.5,1 L16.5,11 L10,6 Z" fill="#d4d3d6"/></svg>
 </div>
 <div id="pstrip">
  <svg class="abs" style="left:384px;top:8px" width="32" height="20"><path d="M1,6 L11,6 L6,12.5 Z" fill="#242326"/><path d="M13,2.5 H29 M13,7 H29 M13,11.5 H29 M13,16 H29" stroke="#343336" stroke-width="2"/></svg>
 </div>
 <div id="pband"></div>
 <div id="ptab"><svg class="abs" style="left:7px;top:11px" width="10" height="15"><path d="M1.3,5.6 L5,1.6 L8.7,5.6 M1.3,9.4 L5,13.4 L8.7,9.4" fill="none" stroke="#2a2a30" stroke-width="1.8"/></svg><span class="abs" style="left:23px;top:0">SCRIPTOGRAPHER</span></div>
 <div id="tree">
<div class="row" style="top:0px"><span class="ic" style="left:10px;top:7px"><svg class="tri" viewBox="0 0 20 18" width="20" height="18"><path d="M0,0 L20,0 L10,18 Z" fill="#757375"/></svg></span><span class="ic" style="left:42px;top:2px"><svg class="fold" viewBox="0 0 32 26" width="32" height="26"><path d="M2,23.6 L2,6 L5.4,2 L12,2 L15.6,6 L29,6 L30,7.4 L30,23.6 Q30,24.8 28.8,24.8 L3.2,24.8 Q2,24.8 2,23.6 Z" fill="#fff" stroke="#111" stroke-width="2" stroke-linejoin="round"/></svg></span><span class="lbl" style="left:80.5px">Examples</span></div>
<div class="row" style="top:34px"><span class="ic" style="left:53px;top:6px"><svg class="tri" viewBox="0 0 18 20" width="18" height="20"><path d="M0,0 L18,10 L0,20 Z" fill="#757375"/></svg></span><span class="ic" style="left:82px;top:2px"><svg class="fold" viewBox="0 0 32 26" width="32" height="26"><path d="M2,23.6 L2,6 L5.4,2 L12,2 L15.6,6 L29,6 L30,7.4 L30,23.6 Q30,24.8 28.8,24.8 L3.2,24.8 Q2,24.8 2,23.6 Z" fill="#fff" stroke="#111" stroke-width="2" stroke-linejoin="round"/></svg></span><span class="lbl" style="left:120.5px">Rasters</span></div>
<div class="row" style="top:68px"><span class="ic" style="left:53px;top:6px"><svg class="tri" viewBox="0 0 18 20" width="18" height="20"><path d="M0,0 L18,10 L0,20 Z" fill="#757375"/></svg></span><span class="ic" style="left:82px;top:2px"><svg class="fold" viewBox="0 0 32 26" width="32" height="26"><path d="M2,23.6 L2,6 L5.4,2 L12,2 L15.6,6 L29,6 L30,7.4 L30,23.6 Q30,24.8 28.8,24.8 L3.2,24.8 Q2,24.8 2,23.6 Z" fill="#fff" stroke="#111" stroke-width="2" stroke-linejoin="round"/></svg></span><span class="lbl" style="left:120.5px">Scripts</span></div>
<div class="row" style="top:102px"><span class="ic" style="left:50px;top:7px"><svg class="tri" viewBox="0 0 20 18" width="20" height="18"><path d="M0,0 L20,0 L10,18 Z" fill="#757375"/></svg></span><span class="ic" style="left:82px;top:2px"><svg class="fold" viewBox="0 0 32 26" width="32" height="26"><path d="M2,23.6 L2,6 L5.4,2 L12,2 L15.6,6 L29,6 L30,7.4 L30,23.6 Q30,24.8 28.8,24.8 L3.2,24.8 Q2,24.8 2,23.6 Z" fill="#fff" stroke="#111" stroke-width="2" stroke-linejoin="round"/></svg></span><span class="lbl" style="left:120.5px">Tools</span></div>
<div class="row" style="top:136px"><span class="ic" style="left:123px;top:2px"><svg class="pen" viewBox="0 0 28 27" width="28" height="27"><path d="M2.1,24.6 L3,19.9 L21,1.8 A2.95,2.95 0 0 1 25.2,5.9 L7.1,24 Z" fill="#fff" stroke="#111" stroke-width="1.3" stroke-linejoin="round"/><path d="M4.4,18.6 L8.5,22.6 M16.9,6 L21,10.1 M19.2,3.7 L23.3,7.8" fill="none" stroke="#111" stroke-width="1.2"/><path d="M2,20.2 L2,24.7 L6.6,24.7" fill="none" stroke="#111" stroke-width="2.1" stroke-linejoin="miter"/></svg></span><span class="lbl" style="left:160.5px">Clone Brush.js</span></div>
<div class="row" style="top:170px"><span class="ic" style="left:123px;top:2px"><svg class="pen" viewBox="0 0 28 27" width="28" height="27"><path d="M2.1,24.6 L3,19.9 L21,1.8 A2.95,2.95 0 0 1 25.2,5.9 L7.1,24 Z" fill="#fff" stroke="#111" stroke-width="1.3" stroke-linejoin="round"/><path d="M4.4,18.6 L8.5,22.6 M16.9,6 L21,10.1 M19.2,3.7 L23.3,7.8" fill="none" stroke="#111" stroke-width="1.2"/><path d="M2,20.2 L2,24.7 L6.6,24.7" fill="none" stroke="#111" stroke-width="2.1" stroke-linejoin="miter"/></svg></span><span class="lbl" style="left:160.5px">Clouds.js</span></div>
<div class="row" style="top:204px"><span class="ic" style="left:123px;top:2px"><svg class="pen" viewBox="0 0 28 27" width="28" height="27"><path d="M2.1,24.6 L3,19.9 L21,1.8 A2.95,2.95 0 0 1 25.2,5.9 L7.1,24 Z" fill="#fff" stroke="#111" stroke-width="1.3" stroke-linejoin="round"/><path d="M4.4,18.6 L8.5,22.6 M16.9,6 L21,10.1 M19.2,3.7 L23.3,7.8" fill="none" stroke="#111" stroke-width="1.2"/><path d="M2,20.2 L2,24.7 L6.6,24.7" fill="none" stroke="#111" stroke-width="2.1" stroke-linejoin="miter"/></svg></span><span class="lbl" style="left:160.5px">Dripping Brush.js</span></div>
<div class="row" style="top:238px"><span class="ic" style="left:123px;top:2px"><svg class="pen" viewBox="0 0 28 27" width="28" height="27"><path d="M2.1,24.6 L3,19.9 L21,1.8 A2.95,2.95 0 0 1 25.2,5.9 L7.1,24 Z" fill="#fff" stroke="#111" stroke-width="1.3" stroke-linejoin="round"/><path d="M4.4,18.6 L8.5,22.6 M16.9,6 L21,10.1 M19.2,3.7 L23.3,7.8" fill="none" stroke="#111" stroke-width="1.2"/><path d="M2,20.2 L2,24.7 L6.6,24.7" fill="none" stroke="#111" stroke-width="2.1" stroke-linejoin="miter"/></svg></span><span class="lbl" style="left:160.5px">Fancy Brush.js</span></div>
<div class="row" style="top:272px"><span class="ic" style="left:123px;top:2px"><svg class="pen" viewBox="0 0 28 27" width="28" height="27"><path d="M2.1,24.6 L3,19.9 L21,1.8 A2.95,2.95 0 0 1 25.2,5.9 L7.1,24 Z" fill="#fff" stroke="#111" stroke-width="1.3" stroke-linejoin="round"/><path d="M4.4,18.6 L8.5,22.6 M16.9,6 L21,10.1 M19.2,3.7 L23.3,7.8" fill="none" stroke="#111" stroke-width="1.2"/><path d="M2,20.2 L2,24.7 L6.6,24.7" fill="none" stroke="#111" stroke-width="2.1" stroke-linejoin="miter"/></svg></span><span class="lbl" style="left:160.5px">Friction.js</span></div>
<div class="row" style="top:306px"><span class="ic" style="left:123px;top:2px"><svg class="pen" viewBox="0 0 28 27" width="28" height="27"><path d="M2.1,24.6 L3,19.9 L21,1.8 A2.95,2.95 0 0 1 25.2,5.9 L7.1,24 Z" fill="#fff" stroke="#111" stroke-width="1.3" stroke-linejoin="round"/><path d="M4.4,18.6 L8.5,22.6 M16.9,6 L21,10.1 M19.2,3.7 L23.3,7.8" fill="none" stroke="#111" stroke-width="1.2"/><path d="M2,20.2 L2,24.7 L6.6,24.7" fill="none" stroke="#111" stroke-width="2.1" stroke-linejoin="miter"/></svg></span><span class="lbl" style="left:160.5px">Grid.js</span></div>
<div class="row" style="top:340px"><span class="ic" style="left:123px;top:2px"><svg class="pen" viewBox="0 0 28 27" width="28" height="27"><path d="M2.1,24.6 L3,19.9 L21,1.8 A2.95,2.95 0 0 1 25.2,5.9 L7.1,24 Z" fill="#fff" stroke="#111" stroke-width="1.3" stroke-linejoin="round"/><path d="M4.4,18.6 L8.5,22.6 M16.9,6 L21,10.1 M19.2,3.7 L23.3,7.8" fill="none" stroke="#111" stroke-width="1.2"/><path d="M2,20.2 L2,24.7 L6.6,24.7" fill="none" stroke="#111" stroke-width="2.1" stroke-linejoin="miter"/></svg></span><span class="lbl" style="left:160.5px">Growth.js</span></div>
<div class="row" style="top:374px"><span class="ic" style="left:123px;top:2px"><svg class="pen" viewBox="0 0 28 27" width="28" height="27"><path d="M2.1,24.6 L3,19.9 L21,1.8 A2.95,2.95 0 0 1 25.2,5.9 L7.1,24 Z" fill="#fff" stroke="#111" stroke-width="1.3" stroke-linejoin="round"/><path d="M4.4,18.6 L8.5,22.6 M16.9,6 L21,10.1 M19.2,3.7 L23.3,7.8" fill="none" stroke="#111" stroke-width="1.2"/><path d="M2,20.2 L2,24.7 L6.6,24.7" fill="none" stroke="#111" stroke-width="2.1" stroke-linejoin="miter"/></svg></span><span class="lbl" style="left:160.5px">Multi Lines.js</span></div>
<div class="row" style="top:408px"><span class="ic" style="left:123px;top:2px"><svg class="pen" viewBox="0 0 28 27" width="28" height="27"><path d="M2.1,24.6 L3,19.9 L21,1.8 A2.95,2.95 0 0 1 25.2,5.9 L7.1,24 Z" fill="#fff" stroke="#111" stroke-width="1.3" stroke-linejoin="round"/><path d="M4.4,18.6 L8.5,22.6 M16.9,6 L21,10.1 M19.2,3.7 L23.3,7.8" fill="none" stroke="#111" stroke-width="1.2"/><path d="M2,20.2 L2,24.7 L6.6,24.7" fill="none" stroke="#111" stroke-width="2.1" stroke-linejoin="miter"/></svg></span><span class="lbl" style="left:160.5px">Scribbler.js</span></div>
<div class="row" style="top:442px"><span class="ic" style="left:123px;top:2px"><svg class="pen" viewBox="0 0 28 27" width="28" height="27"><path d="M2.1,24.6 L3,19.9 L21,1.8 A2.95,2.95 0 0 1 25.2,5.9 L7.1,24 Z" fill="#fff" stroke="#111" stroke-width="1.3" stroke-linejoin="round"/><path d="M4.4,18.6 L8.5,22.6 M16.9,6 L21,10.1 M19.2,3.7 L23.3,7.8" fill="none" stroke="#111" stroke-width="1.2"/><path d="M2,20.2 L2,24.7 L6.6,24.7" fill="none" stroke="#111" stroke-width="2.1" stroke-linejoin="miter"/></svg></span><span class="lbl" style="left:160.5px">Square Rounded.js</span></div>
<div class="row" style="top:476px"><span class="ic" style="left:123px;top:2px"><svg class="pen" viewBox="0 0 28 27" width="28" height="27"><path d="M2.1,24.6 L3,19.9 L21,1.8 A2.95,2.95 0 0 1 25.2,5.9 L7.1,24 Z" fill="#fff" stroke="#111" stroke-width="1.3" stroke-linejoin="round"/><path d="M4.4,18.6 L8.5,22.6 M16.9,6 L21,10.1 M19.2,3.7 L23.3,7.8" fill="none" stroke="#111" stroke-width="1.2"/><path d="M2,20.2 L2,24.7 L6.6,24.7" fill="none" stroke="#111" stroke-width="2.1" stroke-linejoin="miter"/></svg></span><span class="lbl" style="left:160.5px">Square.js</span></div>
<div class="row" style="top:510px"><span class="ic" style="left:123px;top:2px"><svg class="pen" viewBox="0 0 28 27" width="28" height="27"><path d="M2.1,24.6 L3,19.9 L21,1.8 A2.95,2.95 0 0 1 25.2,5.9 L7.1,24 Z" fill="#fff" stroke="#111" stroke-width="1.3" stroke-linejoin="round"/><path d="M4.4,18.6 L8.5,22.6 M16.9,6 L21,10.1 M19.2,3.7 L23.3,7.8" fill="none" stroke="#111" stroke-width="1.2"/><path d="M2,20.2 L2,24.7 L6.6,24.7" fill="none" stroke="#111" stroke-width="2.1" stroke-linejoin="miter"/></svg></span><span class="lbl" style="left:160.5px">Stitch.js</span></div>
<div class="row" style="top:544px"><span class="ic" style="left:123px;top:2px"><svg class="pen" viewBox="0 0 28 27" width="28" height="27"><path d="M2.1,24.6 L3,19.9 L21,1.8 A2.95,2.95 0 0 1 25.2,5.9 L7.1,24 Z" fill="#fff" stroke="#111" stroke-width="1.3" stroke-linejoin="round"/><path d="M4.4,18.6 L8.5,22.6 M16.9,6 L21,10.1 M19.2,3.7 L23.3,7.8" fill="none" stroke="#111" stroke-width="1.2"/><path d="M2,20.2 L2,24.7 L6.6,24.7" fill="none" stroke="#111" stroke-width="2.1" stroke-linejoin="miter"/></svg></span><span class="lbl" style="left:160.5px">Throw.js</span></div>
<div class="row" style="top:578px"><span class="ic" style="left:123px;top:2px"><svg class="pen" viewBox="0 0 28 27" width="28" height="27"><path d="M2.1,24.6 L3,19.9 L21,1.8 A2.95,2.95 0 0 1 25.2,5.9 L7.1,24 Z" fill="#fff" stroke="#111" stroke-width="1.3" stroke-linejoin="round"/><path d="M4.4,18.6 L8.5,22.6 M16.9,6 L21,10.1 M19.2,3.7 L23.3,7.8" fill="none" stroke="#111" stroke-width="1.2"/><path d="M2,20.2 L2,24.7 L6.6,24.7" fill="none" stroke="#111" stroke-width="2.1" stroke-linejoin="miter"/></svg></span><span class="lbl" style="left:160.5px">Tree.js</span></div>
<div class="row" style="top:612px"><span class="ic" style="left:123px;top:2px"><svg class="pen" viewBox="0 0 28 27" width="28" height="27"><path d="M2.1,24.6 L3,19.9 L21,1.8 A2.95,2.95 0 0 1 25.2,5.9 L7.1,24 Z" fill="#fff" stroke="#111" stroke-width="1.3" stroke-linejoin="round"/><path d="M4.4,18.6 L8.5,22.6 M16.9,6 L21,10.1 M19.2,3.7 L23.3,7.8" fill="none" stroke="#111" stroke-width="1.2"/><path d="M2,20.2 L2,24.7 L6.6,24.7" fill="none" stroke="#111" stroke-width="2.1" stroke-linejoin="miter"/></svg></span><span class="lbl" style="left:160.5px">Vektor.js</span></div>
<div class="row" style="top:646px"><span class="ic" style="left:123px;top:2px"><svg class="pen" viewBox="0 0 28 27" width="28" height="27"><path d="M2.1,24.6 L3,19.9 L21,1.8 A2.95,2.95 0 0 1 25.2,5.9 L7.1,24 Z" fill="#fff" stroke="#111" stroke-width="1.3" stroke-linejoin="round"/><path d="M4.4,18.6 L8.5,22.6 M16.9,6 L21,10.1 M19.2,3.7 L23.3,7.8" fill="none" stroke="#111" stroke-width="1.2"/><path d="M2,20.2 L2,24.7 L6.6,24.7" fill="none" stroke="#111" stroke-width="2.1" stroke-linejoin="miter"/></svg></span><span class="lbl" style="left:160.5px">Wave.js</span></div>
<div class="row" style="top:680px"><span class="ic" style="left:123px;top:2px"><svg class="pen" viewBox="0 0 28 27" width="28" height="27"><path d="M2.1,24.6 L3,19.9 L21,1.8 A2.95,2.95 0 0 1 25.2,5.9 L7.1,24 Z" fill="#fff" stroke="#111" stroke-width="1.3" stroke-linejoin="round"/><path d="M4.4,18.6 L8.5,22.6 M16.9,6 L21,10.1 M19.2,3.7 L23.3,7.8" fill="none" stroke="#111" stroke-width="1.2"/><path d="M2,20.2 L2,24.7 L6.6,24.7" fill="none" stroke="#111" stroke-width="2.1" stroke-linejoin="miter"/></svg></span><span class="lbl" style="left:160.5px">Weed Rounded.js</span></div>
<div class="row" style="top:714px"><span class="ic" style="left:123px;top:2px"><svg class="pen" viewBox="0 0 28 27" width="28" height="27"><path d="M2.1,24.6 L3,19.9 L21,1.8 A2.95,2.95 0 0 1 25.2,5.9 L7.1,24 Z" fill="#fff" stroke="#111" stroke-width="1.3" stroke-linejoin="round"/><path d="M4.4,18.6 L8.5,22.6 M16.9,6 L21,10.1 M19.2,3.7 L23.3,7.8" fill="none" stroke="#111" stroke-width="1.2"/><path d="M2,20.2 L2,24.7 L6.6,24.7" fill="none" stroke="#111" stroke-width="2.1" stroke-linejoin="miter"/></svg></span><span class="lbl" style="left:160.5px">Weed.js</span></div>
<div class="row" style="top:748px"><span class="ic" style="left:123px;top:2px"><svg class="pen" viewBox="0 0 28 27" width="28" height="27"><path d="M2.1,24.6 L3,19.9 L21,1.8 A2.95,2.95 0 0 1 25.2,5.9 L7.1,24 Z" fill="#fff" stroke="#111" stroke-width="1.3" stroke-linejoin="round"/><path d="M4.4,18.6 L8.5,22.6 M16.9,6 L21,10.1 M19.2,3.7 L23.3,7.8" fill="none" stroke="#111" stroke-width="1.2"/><path d="M2,20.2 L2,24.7 L6.6,24.7" fill="none" stroke="#111" stroke-width="2.1" stroke-linejoin="miter"/></svg></span><span class="lbl" style="left:160.5px">Worm Farm.js</span></div>
 </div>
 <div id="pvs">
  <div class="thumb" style="left:2.5px;top:11px;width:24.5px;height:42px;background:linear-gradient(180deg,rgba(35,60,185,.8) 0,rgba(35,60,185,0) 24%,rgba(35,60,185,0) 74%,rgba(35,60,185,.75) 100%),linear-gradient(90deg,#3662d6 0,#5188e6 12%,#9fc6f6 20%,#a9cff8 36%,#5a92e6 43%,#76b0f0 64%,#a9e0ff 88%,#74b4f0 100%);box-shadow:0 0 0 1px rgba(40,60,170,.55),0 1px 2px rgba(0,0,0,.3)"></div>
  <svg class="abs" style="left:0;top:700px" width="29" height="76" viewBox="0 0 29 76"><path d="M0,24 Q0,10 14.5,10 Q29,10 29,24 L29,76 L0,76 Z" fill="#f3f2f4"/>
   <path d="M0,0 L0,10 Q2,24 14.5,24 Q27,24 29,10 L29,0" fill="none" stroke="#c9c8ca" stroke-width="1.5"/>
   <path d="M8,33 L20,33 L14,22 Z M8,55 L20,55 L14,66 Z" fill="#59585b"/><rect x="2" y="43" width="25" height="1.5" fill="#c4c3c5"/></svg>
 </div>
 <div id="ptool">
  <div class="tb" style="left:0;width:52px;border-left:none"><svg style="left:15px;top:4px" width="24" height="20"><path d="M2.5,2 L20,10 L2.5,18 Z" fill="#fff" stroke="#a9a8ab" stroke-width="1.8" stroke-linejoin="round"/></svg></div>
  <div class="tb on" style="left:50px;width:55px"><svg style="left:16px;top:5px" width="18" height="16"><rect width="17" height="15" fill="#000"/></svg></div>
  <div class="tb" style="left:108px;width:55px"><svg style="left:10px;top:1px" width="32" height="26"><path d="M3,2 L13,2 L19,9 L19,24 L3,24 Z" fill="#fff" stroke="#b4b3b6" stroke-width="2"/><path d="M13,2 L13,9 L19,9" fill="none" stroke="#b4b3b6" stroke-width="1.6"/><path d="M12,16 L19,11 L19,21 Z" fill="#b9b8bb"/><path d="M19,16 H25 Q30,16 29,11 Q28,8 25,9" fill="none" stroke="#b9b8bb" stroke-width="2"/></svg></div>
  <div class="tb" style="left:166px;width:55px"><svg style="left:13px;top:1px" width="24" height="26"><path d="M2,2 L12,2 L19,9 L19,24 L2,24 Z" fill="#fff" stroke="#b4b3b6" stroke-width="2"/><path d="M11,2 L11,10 L19,10" fill="none" stroke="#b4b3b6" stroke-width="1.6"/></svg></div>
  <div class="tb" style="left:219px;width:55px"><svg style="left:8px;top:1px" width="34" height="26"><path d="M2,24 L2,7 L6,2 L13,2 L17,6 L30,6 L31,8 L31,24 Z" fill="#fff" stroke="#bcbbbe" stroke-width="2" stroke-linejoin="round"/></svg></div>
  <div class="tb on" style="left:277px;width:55px"><svg style="left:9px;top:2px" width="30" height="24"><rect x="1.5" y="2.5" width="23" height="16.5" fill="#fff" stroke="#0a0a0c" stroke-width="2.6"/><rect x="0.5" y="1" width="25" height="4" fill="#0a0a0c"/><path d="M5,8.5 H21 M5,12 H21 M5,15.5 H17" stroke="#0a0a0c" stroke-width="1.8"/></svg></div>
  <svg class="abs" style="left:392px;top:5px" width="24" height="24"><g fill="#a8a7aa"><rect x="18" y="2" width="2" height="2"/><rect x="14" y="6" width="2" height="2"/><rect x="18" y="6" width="2" height="2"/><rect x="10" y="10" width="2" height="2"/><rect x="14" y="10" width="2" height="2"/><rect x="18" y="10" width="2" height="2"/><rect x="6" y="14" width="2" height="2"/><rect x="10" y="14" width="2" height="2"/><rect x="14" y="14" width="2" height="2"/><rect x="18" y="14" width="2" height="2"/><rect x="2" y="18" width="2" height="2"/><rect x="6" y="18" width="2" height="2"/><rect x="10" y="18" width="2" height="2"/><rect x="14" y="18" width="2" height="2"/><rect x="18" y="18" width="2" height="2"/></g></svg>
 </div>
</div>

<div class="foot" style="left:219px;width:389px;font-size:24px;letter-spacing:-.75px"><span style="top:17px;left:1px">Generative Design</span></div>
<div class="foot" style="left:646px;width:605px;font-size:24px;letter-spacing:-.9px"><span style="top:17px">Guy Haviv</span></div>
<div class="foot" style="left:1288px;width:540px;font-size:30px;letter-spacing:-1.1px"><span style="top:15px;left:1px">Designit</span></div>
</body></html>
